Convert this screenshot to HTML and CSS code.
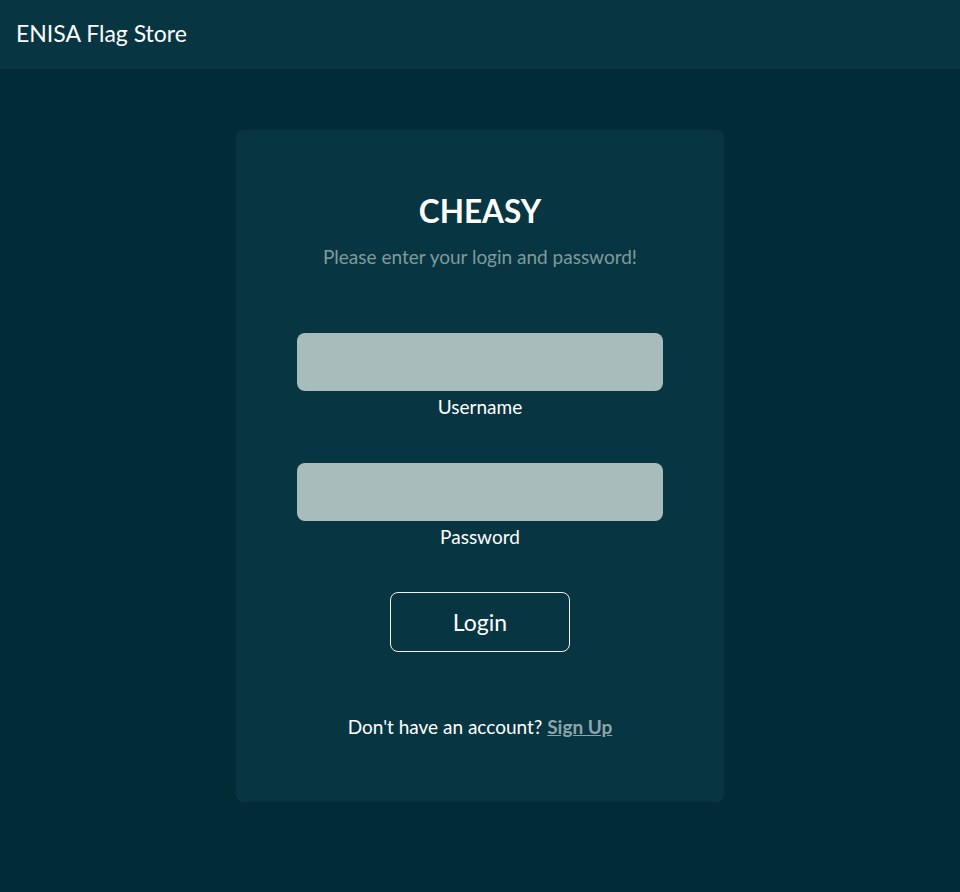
FILE: index.html
```html
<!DOCTYPE html>
<html lang="en">
<head>
<meta charset="utf-8">
<title>ENISA Flag Store</title>
<link rel="stylesheet" href="styles.css">
</head>
<body>
<header class="navbar">
  <span class="brand">ENISA Flag Store</span>
</header>
<main class="page">
  <section class="card">
    <h2 class="title">CHEASY</h2>
    <p class="subtitle">Please enter your login and password!</p>
    <div class="field field-first">
      <input class="input" type="text" id="username">
      <label class="label" for="username">Username</label>
    </div>
    <div class="field field-second">
      <input class="input" type="password" id="password">
      <label class="label" for="password">Password</label>
    </div>
    <button class="btn" type="button">Login</button>
    <p class="signup">Don't have an account? <a href="#" class="signup-link">Sign Up</a></p>
  </section>
</main>
</body>
</html>
```
FILE: styles.css
```css
* { box-sizing: border-box; }
html, body {
  margin: 0;
  padding: 0;
  background: #022b38;
  font-family: "Lato", "Noto Sans", sans-serif;
  color: #ffffff;
}
.navbar {
  height: 69px;
  background: #073642;
  display: flex;
  align-items: center;
  padding: 0 16px 3px;
}
.brand {
  font-size: 23px;
  line-height: 30px;
  color: #ffffff;
}
.page {
  display: flex;
  justify-content: center;
  padding-top: 61px;
}
.card {
  width: 488px;
  background: #073642;
  border-radius: 8px;
  padding: 61px 0 61px;
  display: flex;
  flex-direction: column;
  align-items: center;
  text-align: center;
}
.title {
  margin: 0;
  font-size: 31.5px;
  line-height: 40px;
  font-weight: 700;
}
.subtitle {
  margin: 12px 0 0;
  font-size: 19px;
  line-height: 28px;
  color: #809a9c;
}
.field {
  width: 366px;
  display: flex;
  flex-direction: column;
  align-items: center;
}
.field-first { margin-top: 62px; }
.field-second { margin-top: 43px; }
.input {
  width: 100%;
  height: 58px;
  border: none;
  border-radius: 8px;
  background: #a9bcbc;
  font-size: 20px;
  padding: 0 16px;
  outline: none;
}
.label {
  margin-top: 3px;
  font-size: 19px;
  line-height: 26px;
  color: #ffffff;
}
.btn {
  margin-top: 42px;
  width: 180px;
  height: 60px;
  background: transparent;
  border: 1px solid #f3f3f3;
  border-radius: 8px;
  color: #ffffff;
  font-family: inherit;
  font-size: 23px;
  cursor: pointer;
}
.signup {
  margin: 61px 0 0;
  font-size: 19px;
  line-height: 28px;
}
.signup-link {
  color: #8ca5aa;
  font-weight: 700;
  text-decoration: underline;
}
```
